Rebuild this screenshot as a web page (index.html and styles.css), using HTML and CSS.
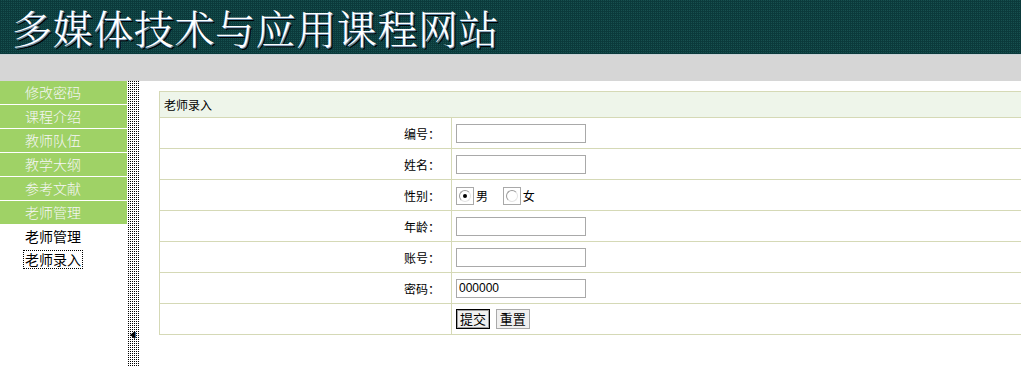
FILE: index.html
```html
<!DOCTYPE html>
<html lang="zh-CN">
<head>
    <meta charset="UTF-8">
    <title>多媒体技术与应用课程网站</title>
    <link rel="stylesheet" href="styles.css">
</head>
<body>
    <div class="top">
        <h1 class="title">多媒体技术与应用课程网站</h1>
    </div>
    <div class="subbar"></div>

    <div class="page">
        <div class="side">
            <ul class="menu">
                <li>修改密码</li>
                <li>课程介绍</li>
                <li>教师队伍</li>
                <li>教学大纲</li>
                <li>参考文献</li>
                <li>老师管理</li>
            </ul>
            <div class="submenu">
                <div class="sub-item">老师管理</div>
                <div class="sub-item"><span class="focused">老师录入</span></div>
            </div>
        </div>

        <div class="split">
            <span class="arrow"></span>
        </div>

        <div class="main">
            <table class="form-table">
                <tr>
                    <th colspan="2">老师录入</th>
                </tr>
                <tr>
                    <td class="label">编号：</td>
                    <td><input type="text" class="field"></td>
                </tr>
                <tr>
                    <td class="label">姓名：</td>
                    <td><input type="text" class="field"></td>
                </tr>
                <tr>
                    <td class="label">性别：</td>
                    <td>
                        <span class="radio-box"><span class="radio checked"></span></span><span class="radio-text">男</span>
                        <span class="radio-box"><span class="radio"></span></span><span class="radio-text">女</span>
                    </td>
                </tr>
                <tr>
                    <td class="label">年龄：</td>
                    <td><input type="text" class="field"></td>
                </tr>
                <tr>
                    <td class="label">账号：</td>
                    <td><input type="text" class="field"></td>
                </tr>
                <tr>
                    <td class="label">密码：</td>
                    <td><input type="text" class="field" value="000000"></td>
                </tr>
                <tr>
                    <td class="label"></td>
                    <td>
                        <button class="btn btn-submit">提交</button>
                        <button class="btn">重置</button>
                    </td>
                </tr>
            </table>
        </div>
    </div>
</body>
</html>
```

FILE: styles.css
```css
body {
    margin: 0;
    height: 367px;
    overflow: hidden;
    background-color: #ffffff;
    font-family: "Noto Sans CJK SC", "Noto Sans", sans-serif;
    font-size: 12px;
    color: #000000;
}

.top {
    height: 54px;
    background-color: #0b3a3b;
    background-image: conic-gradient(#17504f 25%, transparent 0);
    background-size: 2px 2px;
    border-bottom: 1px solid #c9d2d6;
}

.title {
    margin: 0;
    padding-left: 12px;
    font-family: "Noto Serif CJK SC", "Noto Sans CJK SC", serif;
    font-size: 40px;
    font-weight: 300;
    line-height: 54px;
    letter-spacing: 0.6px;
    color: #ffffff;
    text-shadow: 1px 1px 0 #5f86a8, 2px 2px 0 #000000;
}

.subbar {
    height: 26px;
    background-color: #d6d6d6;
}

.page {
    display: flex;
    height: calc(100vh - 81px);
}

.side {
    width: 127px;
}

.menu {
    list-style: none;
    margin: 0;
    padding: 0;
}

.menu li {
    height: 23px;
    line-height: 23px;
    padding-left: 25px;
    background-color: #9fd266;
    border-bottom: 1px solid #ffffff;
    color: #f6f6f6;
    font-size: 14px;
    font-weight: 300;
}

.menu li:last-child {
    border-bottom: none;
}

.submenu {
    padding-top: 1px;
}

.sub-item {
    height: 23px;
    line-height: 23px;
    padding-left: 25px;
    font-size: 14px;
}

.focused {
    display: inline-block;
    margin-left: -2px;
    padding: 0 1px;
    line-height: 17px;
    border: 1px dotted #000000;
}

.split {
    position: relative;
    width: 13px;
    background-image: conic-gradient(#000000 25%, transparent 0);
    background-size: 2px 2px;
}

.arrow {
    position: absolute;
    left: 3px;
    top: 250px;
    width: 0;
    height: 0;
    border-top: 4px solid transparent;
    border-bottom: 4px solid transparent;
    border-right: 5px solid #000000;
    box-shadow: 2px 0 0 -1px #3a6ea5;
}

.main {
    flex: 1;
    padding: 10px 0 0 19px;
}

.form-table {
    width: 100%;
    border-collapse: collapse;
}

.form-table th,
.form-table td {
    border: 1px solid #d5d9b6;
    border-right: none;
    padding: 0;
}

.form-table th {
    height: 25px;
    padding-left: 4px;
    background-color: #eef5ea;
    font-weight: normal;
    text-align: left;
}

.form-table td {
    height: 30px;
    vertical-align: middle;
    padding-left: 4px;
}

.form-table td.label {
    width: 276px;
    padding: 0 11px 0 4px;
    text-align: right;
}

.field {
    display: block;
    box-sizing: border-box;
    width: 130px;
    height: 19px;
    margin: 0;
    padding: 0 2px;
    border: 1px solid #a9a9a9;
    font-family: "Liberation Sans", sans-serif;
    font-size: 12px;
    color: #000000;
}

.radio-box {
    display: inline-flex;
    align-items: center;
    justify-content: center;
    box-sizing: border-box;
    width: 18px;
    height: 18px;
    vertical-align: middle;
    border: 1px solid #a9a9a9;
}

.radio {
    position: relative;
    box-sizing: border-box;
    width: 12px;
    height: 12px;
    border-radius: 50%;
    border: 1px solid #9a9a9a;
    border-right-color: #e4e4e4;
    border-bottom-color: #e4e4e4;
    background-color: #ffffff;
}

.radio.checked::after {
    content: "";
    position: absolute;
    left: 3px;
    top: 3px;
    width: 4px;
    height: 4px;
    border-radius: 50%;
    background-color: #000000;
}

.radio-text {
    display: inline-block;
    margin: 0 12px 0 2px;
    vertical-align: middle;
    font-size: 12px;
}

.btn {
    box-sizing: border-box;
    height: 20px;
    margin: 0 3px 0 0;
    padding: 0 3px;
    border: 1px solid #a9a9a9;
    background-color: #f0f0f0;
    font-family: "Noto Sans CJK SC", sans-serif;
    font-size: 13px;
    line-height: 16px;
    color: #000000;
    vertical-align: middle;
}

.btn-submit {
    border: 1px solid #000000;
    box-shadow: inset 0 0 0 1px #a0a0a0;
}
```
